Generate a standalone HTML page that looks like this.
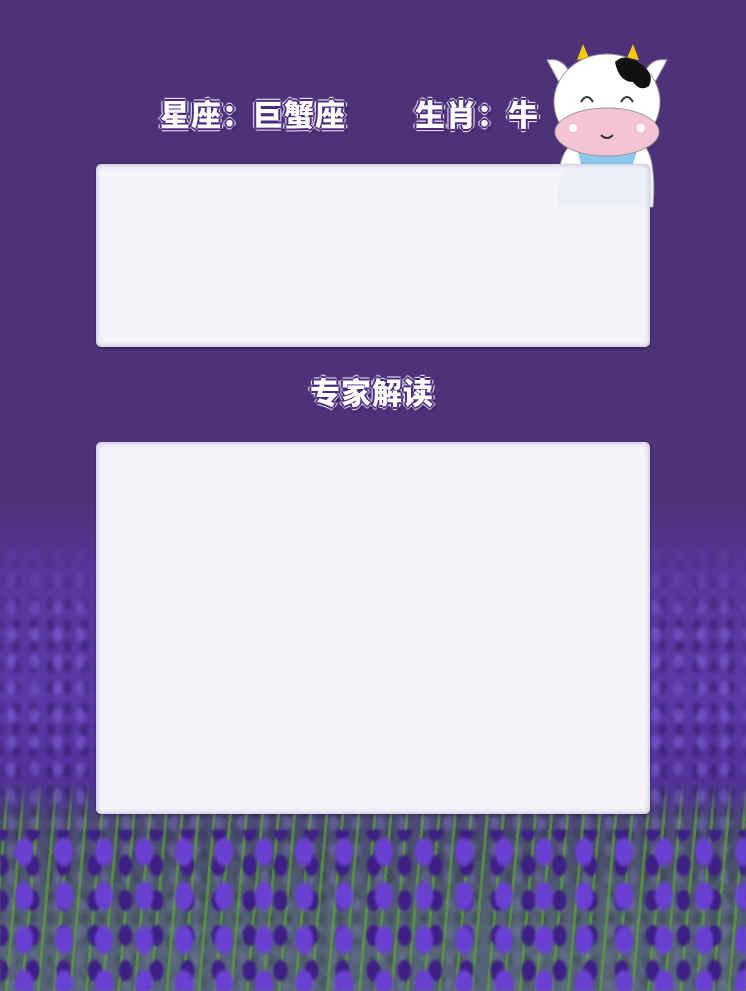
<!DOCTYPE html>
<html><head><meta charset="utf-8"><style>
html,body{margin:0;padding:0}
body{width:746px;height:991px;position:relative;overflow:hidden;background:#4d3279;font-family:"Liberation Sans","Noto Sans CJK SC",sans-serif}
.field{position:absolute;left:0;top:500px;width:746px;height:491px;
background:linear-gradient(180deg,#4d3279 0px,#57389a 70px,#5a3aa6 200px,#4f3196 300px,#4b3c86 360px,#5a4aa0 430px,#5d3cb8 491px);}
.dots{position:absolute;left:0;top:540px;width:746px;height:451px;filter:blur(1.5px);
-webkit-mask-image:linear-gradient(180deg,transparent 0,#000 90px);mask-image:linear-gradient(180deg,transparent 0,#000 90px);
background-image:
radial-gradient(ellipse 6px 9px at 50% 50%,rgba(125,95,215,.6) 0 60%,transparent 100%),
radial-gradient(ellipse 5px 8px at 50% 50%,rgba(40,20,90,.45) 0 60%,transparent 100%);
background-size:23px 27px,17px 21px;background-position:0 0,8px 11px}
.grass{position:absolute;left:0;top:780px;width:746px;height:211px;
-webkit-mask-image:linear-gradient(180deg,transparent 0,#000 40px);mask-image:linear-gradient(180deg,transparent 0,#000 40px);
background:repeating-linear-gradient(95deg,rgba(80,150,50,0) 0 7px,rgba(90,160,50,.7) 7px 10px,rgba(80,150,50,0) 10px 16px),linear-gradient(180deg,rgba(70,130,40,.2),rgba(80,150,50,.45));}
.fl{position:absolute;left:0;top:830px;width:746px;height:161px;filter:blur(1px);
background-image:radial-gradient(ellipse 13px 20px at 50% 50%,#6a40d2 0 60%,transparent 80%),radial-gradient(ellipse 10px 15px at 50% 50%,#3d1f85 0 60%,transparent 80%);
background-size:40px 44px,31px 35px;background-position:4px 0,17px 18px}
.t{position:absolute;color:#fff;font-weight:900;font-size:30px;letter-spacing:1px;line-height:34px;
text-shadow:2px 0 0 #4b2a82,-2px 0 0 #4b2a82,0 2px 0 #4b2a82,0 -2px 0 #4b2a82,3px 0 1px #fff,-3px 0 1px #fff,0 3px 1px #fff,0 -3px 1px #fff,2px 3px 3px #2a1050}
.box{position:absolute;left:96px;width:554px;background:#f5f4f9;border-radius:5px;box-shadow:inset 0 0 6px rgba(120,100,170,.5),0 1px 3px rgba(0,0,0,.3)}
</style></head><body>
<div class="field"></div><div class="dots"></div><div class="grass"></div><div class="fl"></div>
<svg style="position:absolute;left:545px;top:42px" width="125" height="175" viewBox="0 0 125 175">
<path d="M12 165 Q10 110 30 100 L95 100 Q112 110 108 165 Z" fill="#fff" stroke="#999"/>
<path d="M30 100 L95 100 L88 122 L36 122Z" fill="#8cc8ee"/>
<path d="M32 18 L38 2 L44 16Z" fill="#f0c800"/><path d="M82 16 L88 2 L94 18Z" fill="#f0c800"/>
<path d="M2 18 Q20 15 26 35 L15 42Z" fill="#fff" stroke="#999"/><path d="M122 18 Q104 15 98 35 L109 42Z" fill="#fff" stroke="#999"/>
<ellipse cx="62" cy="60" rx="53" ry="48" fill="#fff" stroke="#999"/>
<path d="M70 20 Q80 10 96 22 Q110 32 104 44 Q95 50 88 40 Q74 40 70 20Z" fill="#111"/>
<path d="M36 60 q6-10 12 0 M76 60 q6-10 12 0" stroke="#333" stroke-width="2" fill="none"/>
<ellipse cx="62" cy="90" rx="52" ry="24" fill="#f5c4d2" stroke="#999"/>
<circle cx="28" cy="86" r="4" fill="#fff"/><circle cx="96" cy="86" r="4" fill="#fff"/>
<path d="M56 93 q6 6 12 0" stroke="#333" stroke-width="2" fill="none"/>
</svg>
<div class="t" style="left:160px;top:100px">星座：巨蟹座</div>
<div class="t" style="left:415px;top:100px">生肖：牛</div>
<div class="box" style="top:164px;height:183px"></div>
<svg style="position:absolute;left:545px;top:164px;opacity:.35" width="125" height="55" viewBox="0 122 125 55">
<path d="M12 165 Q10 122 36 122 L88 122 Q112 122 108 165 Z" fill="#dde8f4"/>
</svg>
<div class="t" style="left:310px;top:378px">专家解读</div>
<div class="box" style="top:442px;height:372px"></div>
</body></html>
